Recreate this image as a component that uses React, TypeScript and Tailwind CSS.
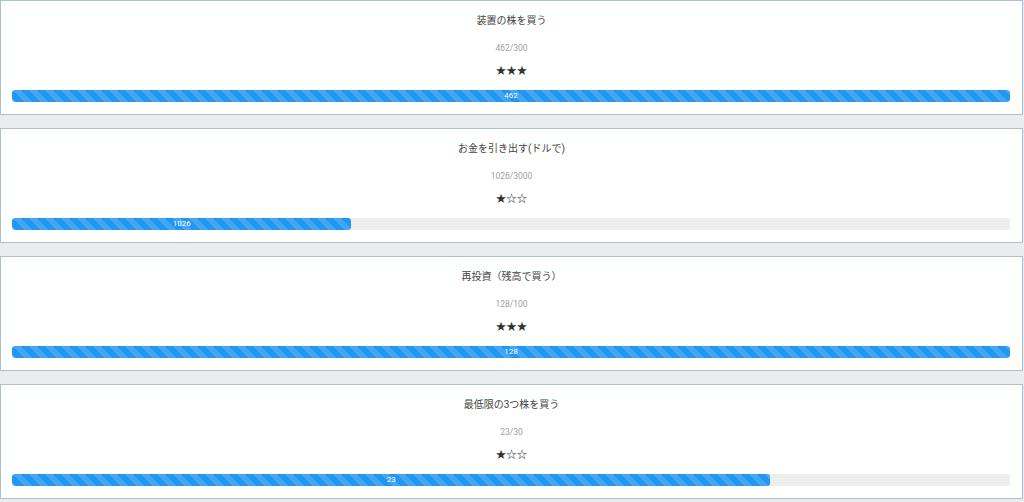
const quests = [
  { title: "装置の株を買う", current: 462, goal: 300, stars: 3 },
  { title: "お金を引き出す(ドルで)", current: 1026, goal: 3000, stars: 1 },
  { title: "再投資（残高で買う）", current: 128, goal: 100, stars: 3 },
  { title: "最低限の3つ株を買う", current: 23, goal: 30, stars: 1 },
];

const QuestCard = ({ title, current, goal, stars }: { title: string; current: number; goal: number; stars: number }) => {
  const pct = Math.min(100, Math.floor((current / goal) * 100));
  return (
    <div className="w-[1023px] mb-[13px] bg-white border border-[#a6c3cf] pt-[13px] pb-[12px] flex flex-col items-center">
      <div className="text-[10px] leading-[14px] text-[#444]">{title}</div>
      <div className="mt-[14px] text-[8.5px] leading-[12px] text-[#a0a0a0]">
        {current}/{goal}
      </div>
      <div className="mt-[9px] text-[10.5px] leading-[14px] text-[#333] font-['Noto_Sans_CJK_JP',sans-serif]">
        {"★".repeat(stars)}
        {"☆".repeat(3 - stars)}
      </div>
      {/* progress */}
      <div className="mt-[13px] self-stretch ml-[11px] mr-[12px] h-[12px] rounded-[3px] bg-[#ededed] overflow-hidden flex">
        <div
          className="h-full rounded-[3px] bg-[#2196f3] bg-[linear-gradient(45deg,rgba(255,255,255,.15)_25%,transparent_25%,transparent_50%,rgba(255,255,255,.15)_50%,rgba(255,255,255,.15)_75%,transparent_75%,transparent)] bg-size-[16px_16px] flex items-center justify-center text-white text-[8px] leading-[12px]"
          style={{ width: `${pct}%` }}
        >
          {current}
        </div>
      </div>
    </div>
  );
};

export default function App() {
  return (
    <div className="min-h-screen bg-[#ececec] font-['Roboto','Noto_Sans_CJK_JP',sans-serif]">
      {quests.map((q) => (
        <QuestCard key={q.title} {...q} />
      ))}
    </div>
  );
}
